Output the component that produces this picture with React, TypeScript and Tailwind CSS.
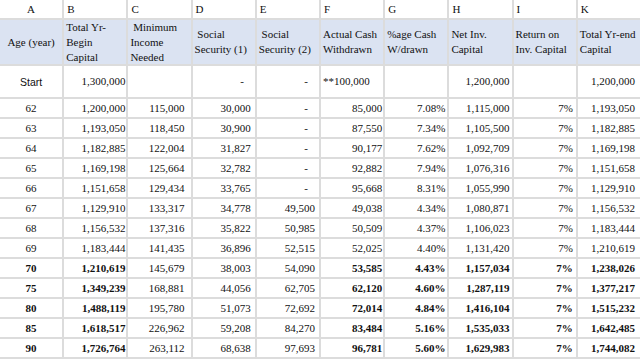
const letters = ['A', 'B', 'C', 'D', 'E', 'F', 'G', 'H', 'I', 'K'];

const headers: string[][] = [
  ['Age (year)'],
  ['Total Yr-', 'Begin', 'Capital'],
  ['\u00a0Minimum', 'Income', 'Needed'],
  ['\u00a0Social', 'Security (1)'],
  ['\u00a0Social', 'Security (2)'],
  ['Actual Cash', 'Withdrawn'],
  ['%age Cash', 'W/drawn'],
  ['Net Inv.', 'Capital'],
  ['Return on', 'Inv. Capital'],
  ['Total Yr-end', 'Capital'],
];

const rows: string[][] = [
  ['62', '1,200,000', '115,000', '30,000', '-', '85,000', '7.08%', '1,115,000', '7%', '1,193,050'],
  ['63', '1,193,050', '118,450', '30,900', '-', '87,550', '7.34%', '1,105,500', '7%', '1,182,885'],
  ['64', '1,182,885', '122,004', '31,827', '-', '90,177', '7.62%', '1,092,709', '7%', '1,169,198'],
  ['65', '1,169,198', '125,664', '32,782', '-', '92,882', '7.94%', '1,076,316', '7%', '1,151,658'],
  ['66', '1,151,658', '129,434', '33,765', '-', '95,668', '8.31%', '1,055,990', '7%', '1,129,910'],
  ['67', '1,129,910', '133,317', '34,778', '49,500', '49,038', '4.34%', '1,080,871', '7%', '1,156,532'],
  ['68', '1,156,532', '137,316', '35,822', '50,985', '50,509', '4.37%', '1,106,023', '7%', '1,183,444'],
  ['69', '1,183,444', '141,435', '36,896', '52,515', '52,025', '4.40%', '1,131,420', '7%', '1,210,619'],
  ['70', '1,210,619', '145,679', '38,003', '54,090', '53,585', '4.43%', '1,157,034', '7%', '1,238,026'],
  ['75', '1,349,239', '168,881', '44,056', '62,705', '62,120', '4.60%', '1,287,119', '7%', '1,377,217'],
  ['80', '1,488,119', '195,780', '51,073', '72,692', '72,014', '4.84%', '1,416,104', '7%', '1,515,232'],
  ['85', '1,618,517', '226,962', '59,208', '84,270', '83,484', '5.16%', '1,535,033', '7%', '1,642,485'],
  ['90', '1,726,764', '263,112', '68,638', '97,693', '96,781', '5.60%', '1,629,983', '7%', '1,744,082'],
];

// right padding of numbers per column, as the sheet's cells sit
const padR = ['', 'pr-[1px]', 'pr-[6px]', 'pr-[4px]', 'pr-[4px]', 'pr-[1px]', 'pr-[2px]', 'pr-[2px]', 'pr-[3px]', 'pr-[5px]'];

// columns C, D, E stay regular in the summary rows
const plainCols = [2, 3, 4];

export default function App() {
  return (
    <div className="w-[640px] h-[360px] overflow-hidden bg-white">
      <div className="grid grid-cols-10 gap-[2px] bg-[#dcdcdc] pb-[2px] font-['Liberation_Serif','Times_New_Roman',serif] text-[11px] leading-[15px] text-[#111]">
        {/* column letters */}
        {letters.map((l, i) => (
          <div
            key={l}
            className={`h-[18px] bg-white flex items-center ${i === 0 ? 'justify-center' : 'pl-[3px]'}`}
          >
            {l}
          </div>
        ))}

        {/* header band */}
        {headers.map((lines, i) => (
          <div
            key={i}
            className={`h-[44px] bg-[#dbe3f2] flex flex-col justify-center ${i === 0 ? 'items-center' : 'pl-[2px]'}`}
          >
            {lines.map((t, j) => (
              <span key={j} className="whitespace-nowrap">{t}</span>
            ))}
          </div>
        ))}

        {/* start row */}
        <div className="h-[31px] bg-white flex items-center justify-center pt-[2px] font-['Liberation_Sans',Arial,sans-serif] text-[10.5px]">
          Start
        </div>
        <div className="h-[31px] bg-white flex items-center justify-end pr-[1px]">1,300,000</div>
        <div className="h-[31px] bg-white" />
        <div className="h-[31px] bg-white flex items-center justify-end pr-[11px]">-</div>
        <div className="h-[31px] bg-white flex items-center justify-end pr-[11px]">-</div>
        <div className="h-[31px] bg-white flex items-center pl-[2px]">**100,000</div>
        <div className="h-[31px] bg-white" />
        <div className="h-[31px] bg-white flex items-center justify-end pr-[2px]">1,200,000</div>
        <div className="h-[31px] bg-white" />
        <div className="h-[31px] bg-white flex items-center justify-end pr-[5px]">1,200,000</div>

        {/* yearly rows */}
        {rows.map((r, ri) =>
          r.map((v, ci) => {
            const bold = ri >= 8 && !plainCols.includes(ci);
            return (
              <div
                key={`${ri}-${ci}`}
                className={`h-[18px] bg-white flex items-center ${
                  ci === 0 ? 'justify-center' : v === '-' ? 'justify-end pr-[11px]' : `justify-end ${padR[ci]}`
                } ${bold ? 'font-bold' : ''}`}
              >
                {v}
              </div>
            );
          })
        )}
      </div>
    </div>
  );
}
